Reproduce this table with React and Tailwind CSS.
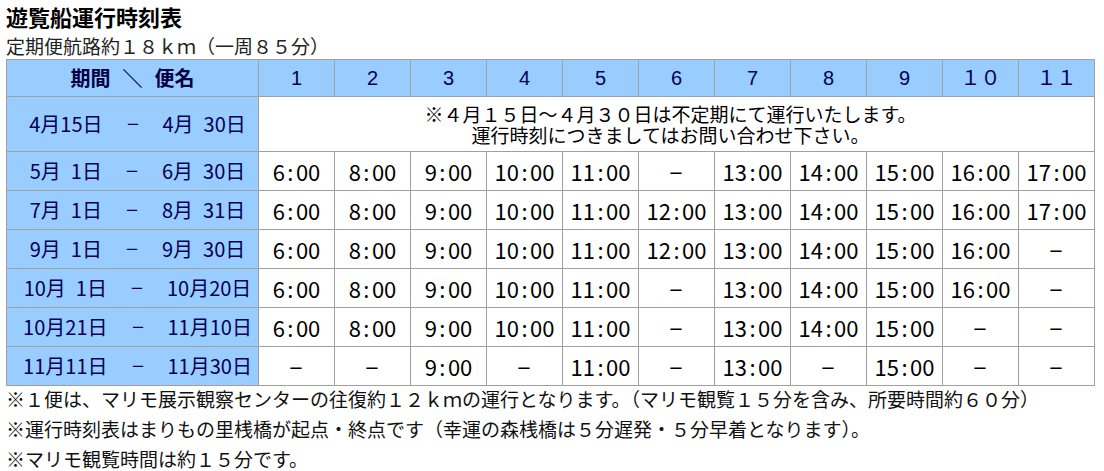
import React from "react";

const headers = ["1", "2", "3", "4", "5", "6", "7", "8", "9", "１０", "１１"];

const rows = [
  { period: ["5月\u20021日", "6月\u200230日"], times: ["6:00", "8:00", "9:00", "10:00", "11:00", "－", "13:00", "14:00", "15:00", "16:00", "17:00"] },
  { period: ["7月\u20021日", "8月\u200231日"], times: ["6:00", "8:00", "9:00", "10:00", "11:00", "12:00", "13:00", "14:00", "15:00", "16:00", "17:00"] },
  { period: ["9月\u20021日", "9月\u200230日"], times: ["6:00", "8:00", "9:00", "10:00", "11:00", "12:00", "13:00", "14:00", "15:00", "16:00", "－"] },
  { period: ["10月\u20021日", "10月20日"], times: ["6:00", "8:00", "9:00", "10:00", "11:00", "－", "13:00", "14:00", "15:00", "16:00", "－"] },
  { period: ["10月21日", "11月10日"], times: ["6:00", "8:00", "9:00", "10:00", "11:00", "－", "13:00", "14:00", "15:00", "－", "－"] },
  { period: ["11月11日", "11月30日"], times: ["－", "－", "9:00", "－", "11:00", "－", "13:00", "－", "15:00", "－", "－"] },
];

function Dash() {
  return <span className="inline-block scale-x-[0.7]">－</span>;
}

function Time({ t }) {
  if (t === "－") return <Dash />;
  const [a, b] = t.split(":");
  return (
    <span className="whitespace-nowrap">
      <span>{a}</span>
      <span className="inline-block w-[11px] text-center">:</span>
      <span>{b}</span>
    </span>
  );
}

function Period({ p }) {
  return (
    <span className="whitespace-pre">
      {p[0]}
      {"\u3000"}
      <Dash />
      {"\u3000"}
      {p[1]}
    </span>
  );
}

export default function App() {
  return (
    <div className="bg-white w-[1104px] h-[471px] pl-[6px] text-black font-['Noto_Sans_CJK_JP',sans-serif] overflow-hidden">
      <div className="text-[22px] font-bold leading-[33px] h-[33px]">遊覧船運行時刻表</div>
      <div className="text-[19px] leading-[26px] h-[26px] text-[#222]">定期便航路約１８ｋｍ（一周８５分）</div>
      <table className="border-collapse table-fixed w-[1089px]">
        <colgroup>
          <col className="w-[252px]" />
          {headers.map((h) => (
            <col key={h} className="w-[76px]" />
          ))}
        </colgroup>
        <tbody>
          <tr className="h-[37px] bg-[#99ccff]">
            <td className="border border-[#a0a0a0] p-0 text-center text-[20px] font-bold text-[#000044] leading-[20px] whitespace-nowrap">
              期間<span className="inline-block mx-[12px]">＼</span>便名
            </td>
            {headers.map((h) => (
              <td key={h} className="border border-[#a0a0a0] p-0 text-center text-[20px] text-[#000055] leading-[20px] font-['Liberation_Sans','Noto_Sans_CJK_JP',sans-serif]">
                {h}
              </td>
            ))}
          </tr>
          <tr className="h-[55px]">
            <td className="border border-[#a0a0a0] p-0 pl-[10px] bg-[#99ccff] text-center text-[20px] text-[#000055] leading-[20px]">
              <Period p={["4月15日", "4月\u200230日"]} />
            </td>
            <td colSpan={11} className="border border-[#a0a0a0] p-0 pr-[12px] text-center text-[19px] leading-[21px] text-black">
              <div>※４月１５日～４月３０日は不定期にて運行いたします。</div>
              <div>運行時刻につきましてはお問い合わせ下さい。</div>
            </td>
          </tr>
          {rows.map((r) => (
            <tr key={r.period[0]} className="h-[39px]">
              <td className="border border-[#a0a0a0] p-0 pl-[10px] bg-[#99ccff] text-center text-[20px] text-[#000055] leading-[20px]">
                <Period p={r.period} />
              </td>
              {r.times.map((t, i) => (
                <td key={i} className="border border-[#a0a0a0] p-0 text-center text-[22px] leading-[22px] text-black">
                  <Time t={t} />
                </td>
              ))}
            </tr>
          ))}
        </tbody>
      </table>
      <div className="mt-[-2px] text-[19px] leading-[30px] text-[#111]">
        <p>※１便は、マリモ展示観察センターの往復約１２ｋｍの運行となります。（マリモ観覧１５分を含み、所要時間約６０分）</p>
        <p>※運行時刻表はまりもの里桟橋が起点・終点です（幸運の森桟橋は５分遅発・５分早着となります）。</p>
        <p>※マリモ観覧時間は約１５分です。</p>
      </div>
    </div>
  );
}
